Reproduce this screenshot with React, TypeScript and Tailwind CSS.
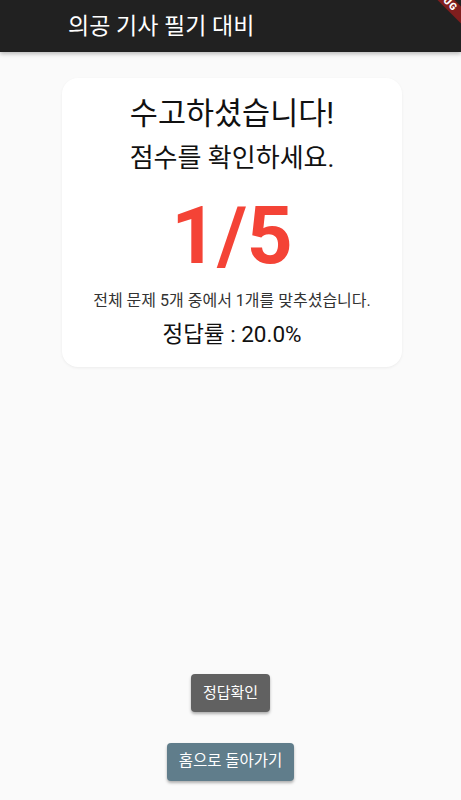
import React from "react";

const KR = { fontFamily: 'Roboto, "Noto Sans CJK KR", sans-serif' };

export default function App() {
  return (
    <div
      className="relative w-full h-[800px] overflow-hidden bg-[#fafafa] flex flex-col"
      style={KR}
    >
      <header className="relative z-10 h-[52px] shrink-0 bg-[#212121] flex items-center pl-[68px] shadow-[0_2px_4px_rgba(0,0,0,0.25)]">
        <h1 className="text-white text-[23px] leading-none font-normal">의공 기사 필기 대비</h1>
      </header>

      <main className="flex-1 flex flex-col">
        <section className="ml-[62px] mt-[26px] w-[340px] h-[289px] bg-white rounded-[16px] shadow-[0_1px_3px_rgba(0,0,0,0.06)] flex flex-col items-center pt-[18px]">
          <p className="text-[30.5px] leading-[1.2] text-[#111]">수고하셨습니다!</p>
          <p className="mt-[10px] text-[26px] leading-[1.2] text-[#111]">점수를 확인하세요.</p>
          <p className="mt-[22px] text-[80px] leading-none font-bold text-[#f44336]">1/5</p>
          <p className="mt-[15px] text-[16px] leading-[1.3] text-[#333]">전체 문제 5개 중에서 1개를 맞추셨습니다.</p>
          <p className="mt-[8px] text-[22.5px] leading-[1.3] text-[#111]">정답률 : 20.0%</p>
        </section>

        <div className="flex-1" />

        <div className="flex flex-col items-center gap-[31px] pb-[19px]">
          <button className="h-[38px] px-[12px] rounded-[4px] bg-[#616161] text-white text-[15px] shadow-[0_2px_3px_rgba(0,0,0,0.3)]">
            정답확인
          </button>
          <button className="h-[38px] px-[12px] rounded-[4px] bg-[#607d8b] text-white text-[15.5px] shadow-[0_2px_3px_rgba(0,0,0,0.3)]">
            홈으로 돌아가기
          </button>
        </div>
      </main>

      <div className="absolute z-20 left-[383px] top-[-9px] w-[120px] h-[12px] rotate-45 bg-[rgba(183,28,28,0.63)] flex items-center justify-center">
        <span className="text-white text-[10px] leading-none font-black tracking-[0.5px]">DEBUG</span>
      </div>
    </div>
  );
}
